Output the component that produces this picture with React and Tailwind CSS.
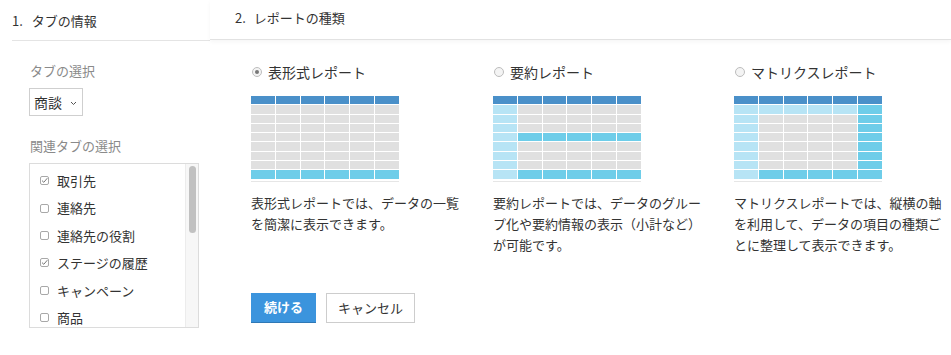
import React from "react";

const BLUE = "bg-[#4a90c9]";
const CYAN = "bg-[#6ecde9]";
const LIGHT = "bg-[#b7e4f5]";
const GRAY = "bg-[#e0e0e0]";

function Table({ cell }) {
  const rows = 9;
  const cols = 6;
  return (
    <div className="w-[148px] pb-[2px] border-b border-[#e6e6e6]">
      <div className="flex flex-col gap-[1px]">
        {Array.from({ length: rows }).map((_, r) => (
          <div key={r} className="flex gap-[1px] h-[8.3px]">
            {Array.from({ length: cols }).map((_, c) => (
              <div key={c} className={"flex-1 " + cell(r, c)} />
            ))}
          </div>
        ))}
      </div>
    </div>
  );
}

const tabular = (r) => (r === 0 ? BLUE : r === 8 ? CYAN : GRAY);
const summary = (r, c) => {
  if (r === 0) return BLUE;
  if (c === 0) return LIGHT;
  if (r === 4 || r === 8) return CYAN;
  return GRAY;
};
const matrix = (r, c) => {
  if (r === 0) return BLUE;
  if (c === 5) return CYAN;
  if (r === 1) return LIGHT;
  if (c === 0) return LIGHT;
  if (r === 8) return CYAN;
  return GRAY;
};

function Radio({ checked }) {
  return (
    <span className="w-[10px] h-[10px] rounded-full border border-[#bdbdbd] bg-[#f4f4f4] flex items-center justify-center">
      {checked && <span className="w-[4px] h-[4px] rounded-full bg-[#777]" />}
    </span>
  );
}

function Check({ checked }) {
  return (
    <svg width="9" height="9" viewBox="0 0 9 9" className="shrink-0">
      <rect x="0.5" y="0.5" width="8" height="8" rx="1.5" fill="#fff" stroke="#a8a8a8" />
      {checked && (
        <path d="M2 4.6 L3.8 6.3 L7.3 2.2" fill="none" stroke="#777" strokeWidth="1" />
      )}
    </svg>
  );
}

const items = [
  ["取引先", true],
  ["連絡先", false],
  ["連絡先の役割", false],
  ["ステージの履歴", true],
  ["キャンペーン", false],
  ["商品", false],
];

const cols = [
  {
    label: "表形式レポート",
    checked: true,
    cell: tabular,
    desc: ["表形式レポートでは、データの一覧", "を簡潔に表示できます。"],
  },
  {
    label: "要約レポート",
    checked: false,
    cell: summary,
    desc: ["要約レポートでは、データのグルー", "プ化や要約情報の表示（小計など）", "が可能です。"],
  },
  {
    label: "マトリクスレポート",
    checked: false,
    cell: matrix,
    desc: ["マトリクスレポートでは、縦横の軸", "を利用して、データの項目の種類ご", "とに整理して表示できます。"],
  },
];

export default function App() {
  return (
    <div
      className="w-[951px] h-[355px] bg-white overflow-hidden text-[#333]"
      style={{ fontFamily: '"Noto Sans CJK JP", "Noto Sans", sans-serif' }}
    >
      <div className="flex h-[41px]">
        <div className="ml-[12px] w-[198px] border-b border-[#e4e4e4] flex items-center text-[13px] pt-[1px]">
          <span className="mr-[9px]">1.</span>
          <span>タブの情報</span>
        </div>
        <div className="flex-1 h-[40px] border-b border-[#e2e2e2] shadow-[0_2px_4px_rgba(0,0,0,0.04)] flex items-center pl-[25px] text-[13px] pb-[4px]">
          <span className="mr-[8px]">2.</span>
          <span>レポートの種類</span>
        </div>
      </div>
      <div className="flex">
        <div className="w-[223px] pl-[29px] pt-[21px] shrink-0">
          <div className="text-[13px] leading-[18px] text-[#8a8a8a] pl-[1px]">タブの選択</div>
          <div className="mt-[8px] w-[54px] h-[28px] border border-[#cfcfcf] flex items-center pl-[4px] text-[14px]">
            <span>商談</span>
            <svg width="7" height="5" viewBox="0 0 7 5" className="ml-[8px] mt-[2px]">
              <path d="M1 1 L3.5 3.5 L6 1" fill="none" stroke="#555" strokeWidth="1" />
            </svg>
          </div>
          <div className="mt-[21px] text-[13px] leading-[18px] text-[#8a8a8a] pl-[1px]">関連タブの選択</div>
          <div className="mt-[8px] w-[170px] h-[165px] border border-[#dcdcdc] flex overflow-hidden">
            <div className="flex-1 pl-[10px] pt-[3px] flex flex-col">
              {items.map(([t, c]) => (
                <div key={t} className="shrink-0 h-[27.4px] flex items-center gap-[8px] text-[13px]">
                  <Check checked={c} />
                  <span>{t}</span>
                </div>
              ))}
            </div>
            <div className="w-[13px] bg-[#f7f7f7] border-l border-[#ececec] pt-[2px] flex justify-center">
              <div className="w-[7px] h-[67px] rounded-full bg-[#c1c1c1]" />
            </div>
          </div>
        </div>
        <div className="pl-[28px] pt-[21px]">
          <div className="flex">
            {cols.map((c, i) => (
              <div key={i} className={i === 0 ? "w-[242px]" : i === 1 ? "w-[241px]" : "w-[217px]"}>
                <div className="flex items-center gap-[6px] pl-[1px] h-[20px] text-[14px]">
                  <Radio checked={c.checked} />
                  <span>{c.label}</span>
                </div>
                <div className="mt-[14px]">
                  <Table cell={c.cell} />
                </div>
                <div className="mt-[10px] text-[13px] leading-[21px]">
                  {c.desc.map((d) => (
                    <div key={d} className="whitespace-nowrap">{d}</div>
                  ))}
                </div>
              </div>
            ))}
          </div>
          <div className="flex gap-[10px] mt-[38px]">
            <button className="w-[65px] h-[30px] bg-[#3b94dd] text-white text-[13px] font-bold border-b border-[#2f78b5]">
              続ける
            </button>
            <button className="w-[89px] h-[30px] bg-white border border-[#cdcdcd] text-[13px]">
              キャンセル
            </button>
          </div>
        </div>
      </div>
    </div>
  );
}
